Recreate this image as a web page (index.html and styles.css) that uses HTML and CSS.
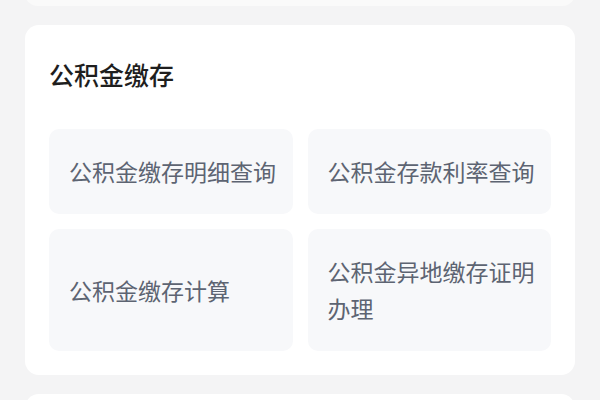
FILE: index.html
```html
<!DOCTYPE html>
<html lang="zh-CN">
<head>
<meta charset="utf-8">
<title>公积金缴存</title>
<link rel="stylesheet" href="styles.css">
</head>
<body>
<div class="page">
  <div class="card card-prev"></div>
  <section class="card">
    <h2 class="card-title">公积金缴存</h2>
    <div class="grid">
      <div class="tile">公积金缴存明细查询</div>
      <div class="tile">公积金存款利率查询</div>
      <div class="tile">公积金缴存计算</div>
      <div class="tile">公积金异地缴存证明办理</div>
    </div>
  </section>
  <div class="card card-next"></div>
</div>
</body>
</html>
```
FILE: styles.css
```css
html, body {
  margin: 0;
  padding: 0;
  background: #f4f4f5;
  font-family: "Noto Sans CJK SC", "Noto Sans", sans-serif;
}
.page {
  width: 600px;
  height: 400px;
  overflow: hidden;
  display: flex;
  flex-direction: column;
  align-items: center;
  gap: 19px;
}
.card {
  width: 550px;
  box-sizing: border-box;
  background: #ffffff;
  border-radius: 14px;
  padding: 24px;
  flex-shrink: 0;
}
.card-prev {
  height: 25px;
  margin-top: -19px;
  padding: 0;
  background: #fafafa;
}
.card-next {
  height: 60px;
  padding: 0;
}
.card-title {
  margin: 0 0 30px 0;
  font-size: 25px;
  line-height: 50px;
  font-weight: 500;
  color: #1e1e1e;
}
.grid {
  display: grid;
  grid-template-columns: 1fr 1fr;
  column-gap: 15px;
  row-gap: 15px;
}
.tile {
  background: #f7f8fa;
  border-radius: 10px;
  padding: 24px 10px 24px 20px;
  font-size: 23px;
  line-height: 37px;
  color: #5d6472;
  display: flex;
  align-items: center;
}
```
